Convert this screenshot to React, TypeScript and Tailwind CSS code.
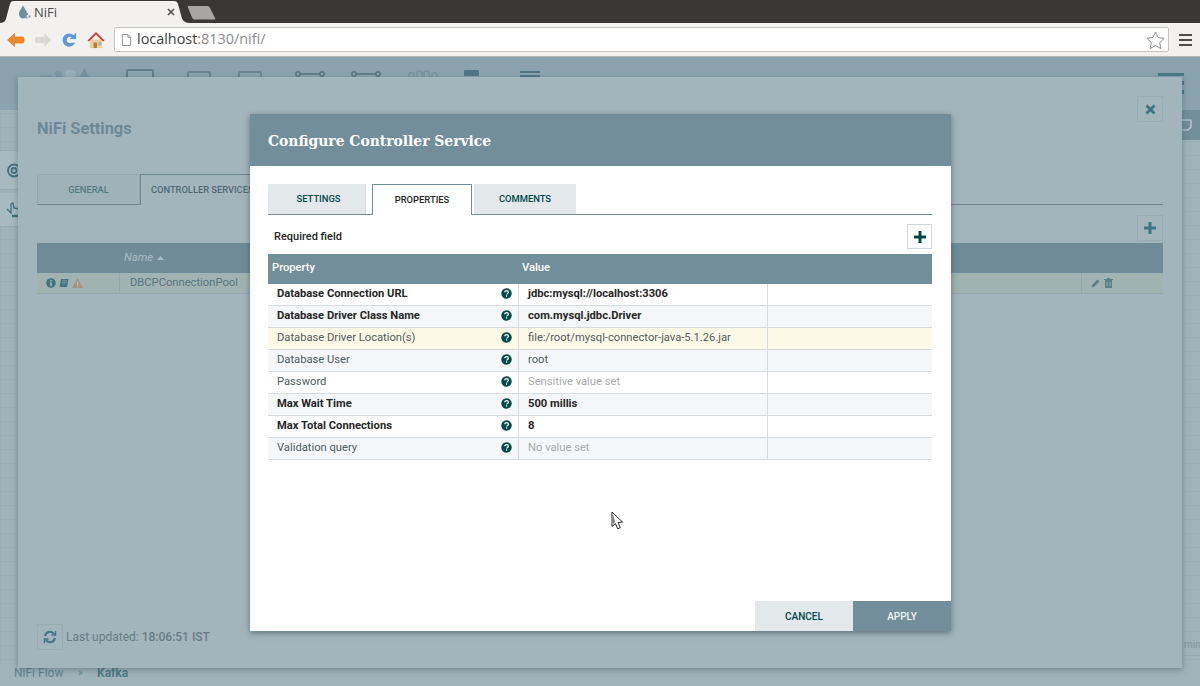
import React from "react";

const rows: { name: string; value: string; bold?: boolean; muted?: boolean; bg: string }[] = [
  { name: "Database Connection URL", value: "jdbc:mysql://localhost:3306", bold: true, bg: "bg-white" },
  { name: "Database Driver Class Name", value: "com.mysql.jdbc.Driver", bold: true, bg: "bg-[#f4f6f7]" },
  { name: "Database Driver Location(s)", value: "file:/root/mysql-connector-java-5.1.26.jar", bg: "bg-[#fdf9e7]" },
  { name: "Database User", value: "root", bg: "bg-[#f4f6f7]" },
  { name: "Password", value: "Sensitive value set", muted: true, bg: "bg-white" },
  { name: "Max Wait Time", value: "500 millis", bold: true, bg: "bg-[#f4f6f7]" },
  { name: "Max Total Connections", value: "8", bold: true, bg: "bg-white" },
  { name: "Validation query", value: "No value set", muted: true, bg: "bg-[#f4f6f7]" },
];

function Help() {
  return (
    <svg width="11" height="11" viewBox="0 0 11 11" className="shrink-0 mb-[2px]">
      <circle cx="5.5" cy="5.5" r="5.2" fill="#004849" />
      <path d="M3.7 4.3c0-1 .8-1.6 1.8-1.6s1.9.6 1.9 1.5c0 1.3-1.7 1.2-1.7 2.4" fill="none" stroke="#fff" strokeWidth="1.3" />
      <rect x="4.9" y="7.3" width="1.3" height="1.3" fill="#fff" />
    </svg>
  );
}

function Cursor() {
  return (
    <svg width="13" height="19" viewBox="0 0 13 19" className="absolute left-[611px] top-[454px]">
      <path d="M1 1v14.5l3.4-3 2.3 5.3 2.6-1.1-2.3-5.2 4.6-.4z" fill="#fff" stroke="#222" strokeWidth="1" strokeLinejoin="round" />
      <path d="M2 3v10l2-2z" fill="#777" />
    </svg>
  );
}

function ChromeBar() {
  return (
    <>
      <div className="relative h-[23px] bg-[#3a3835] shrink-0">
        <svg width="200" height="23" viewBox="0 0 200 23" className="absolute left-0 top-0">
          <path d="M0 23c5 0 6-3 7-8l3-11c.6-2 1.6-3 4-3h160c2.4 0 3.4 1 4 3l3 11c1 5 3 8 9 8z" fill="#f2f1f0" />
        </svg>
        <svg width="30" height="18" viewBox="0 0 30 18" className="absolute left-[187px] top-[5px]">
          <path d="M1 1h19c1.5 0 2 .5 3 2l5 10c.5 1 .3 1.500-1 1.500H8c-1.500 0-2-.5-3-2L1 2.500C.6 1.500.5 1 1 1z" fill="#a8a6a3" />
        </svg>
        <svg width="13" height="15" viewBox="0 0 13 15" className="absolute left-[18px] top-[5px]">
          <path d="M5 0C5.500 3 9 5 9 9a4 4.500 0 0 1-8 0C1 5 4.500 3 5 0z" fill="#6f8ea0" />
          <rect x="8" y="8" width="2" height="2" fill="#7f99a8" />
          <rect x="10.500" y="10.500" width="2" height="2" fill="#7f99a8" />
          <rect x="7.500" y="11.500" width="2" height="2" fill="#7f99a8" />
        </svg>
        <span className="absolute left-[34px] top-[3px] text-[13px] leading-[18px] text-[#4a4a4a] font-['Open_Sans',sans-serif]">NiFi</span>
        <svg width="8" height="8" viewBox="0 0 8 8" className="absolute left-[167px] top-[8px]">
          <path d="M1 1l6 6M7 1L1 7" stroke="#555" strokeWidth="1.700" />
        </svg>
      </div>
      <div className="h-[34px] shrink-0 bg-[#f2f1f0] border-b border-[#b3b3b0] flex items-center pl-[7px] pr-[8px]">
        <svg width="18" height="16" viewBox="0 0 18 16" className="mr-[9px]">
          <path d="M.5 8l7-6.500V5H16c1.500 0 1.500 6 0 6H7.500v3.500z" fill="#ef8a2c" stroke="#d8701c" strokeWidth=".6" />
        </svg>
        <svg width="18" height="16" viewBox="0 0 18 16" className="mr-[9px]">
          <path d="M17.500 8l-7-6.500V5H2c-1.500 0-1.500 6 0 6h8.500v3.500z" fill="#d9d8d6" />
        </svg>
        <svg width="17" height="17" viewBox="0 0 18 18" className="mr-[9px]">
          <path d="M13.500 4.500A7 7 0 1 0 15 12.500h-3.800A3.400 3.400 0 1 1 11 6.500L9 8.500h7V1.500z" fill="#5d9bd8" />
        </svg>
        <svg width="18" height="18" viewBox="0 0 19 19" className="mr-[9px]">
          <path d="M3 9h13v9H3z" fill="#e8cf9b" />
          <path d="M.5 10L9.500 1l9 9-1.500 1-7.500-7L2 11z" fill="#c9413c" />
          <path d="M7 12h3.500v6H7z" fill="#b67a38" />
          <path d="M12 12h3v3h-3z" fill="#8fb2cf" />
        </svg>
        <div className="h-[25px] flex-1 bg-white border border-[#c4c3c1] rounded-[2px] flex items-center pl-[6px] mr-[10px]">
          <svg width="11" height="14" viewBox="0 0 12 14" className="mr-[5px]">
            <path d="M1.500 1h6l3 3v9h-9z M7.500 1v3h3" fill="#fff" stroke="#8c8c8c" />
          </svg>
          <span className="text-[14.4px] leading-none font-['Open_Sans',sans-serif] text-[#3d3d3d]">
            localhost<span className="text-[#8a8a8a]">:8130/nifi/</span>
          </span>
          <svg width="19" height="18" viewBox="0 0 19 18" className="ml-auto mr-[3px]">
            <path d="M9.500 1l2.600 5.500 6 .8-4.400 4.200 1.100 6-5.300-2.900-5.300 2.900 1.100-6L1 7.300l6-.8z" fill="#fff" stroke="#8c8c8c" />
          </svg>
        </div>
        <div className="w-[13px] flex flex-col gap-[3px]">
          <div className="h-[2px] bg-[#4d4d4d]" />
          <div className="h-[2px] bg-[#4d4d4d]" />
          <div className="h-[2px] bg-[#4d4d4d]" />
        </div>
      </div>
    </>
  );
}

function PageToolbar() {
  return (
    <div className="relative h-[53px] bg-[#8ba3af] flex items-start pt-[12px]">
      <div className="ml-[40px] w-[50px] flex items-end gap-[3px] h-[9px]">
        <span className="w-[12px] h-[3px] mt-auto bg-[#7f98a5] rounded-sm" />
        <span className="w-[7px] h-[7px] rounded-full bg-[#7f98a5]" />
        <span className="w-[12px] h-[8px] rounded-sm bg-[#98aeb9]" />
        <svg width="11" height="10" viewBox="0 0 11 10"><path d="M5.500 0L11 10H0z" fill="#7592a0" /></svg>
      </div>
      <div className="ml-[36px] w-[28px] h-[20px] border-2 border-[#5f7d8b] rounded-[2px]" />
      <div className="ml-[33px] mt-[2px] w-[24px] h-[20px] border-2 border-[#6a8694] rounded-[2px]" />
      <div className="ml-[27px] mt-[2px] w-[24px] h-[20px] border-2 border-[#6a8694] rounded-[2px]" />
      <svg width="30" height="8" viewBox="0 0 30 8" className="ml-[33px] mt-[1px]" fill="none" stroke="#55747f" strokeWidth="1.500">
        <rect x="1" y="2" width="4" height="4" rx="1" /><rect x="25" y="2" width="4" height="4" rx="1" /><path d="M5 4h20" />
      </svg>
      <svg width="30" height="8" viewBox="0 0 30 8" className="ml-[26px] mt-[1px]" fill="none" stroke="#55747f" strokeWidth="1.500">
        <rect x="1" y="2" width="4" height="4" rx="1" /><rect x="25" y="2" width="4" height="4" rx="1" /><path d="M5 4h20" />
      </svg>
      <svg width="30" height="8" viewBox="0 0 30 8" className="ml-[27px] mt-[1px]" fill="none" stroke="#6f8b98" strokeWidth="1">
        <rect x="1" y="3" width="5" height="5" rx="1" /><rect x="9" y="1" width="5" height="7" rx="1" /><rect x="16" y="1" width="5" height="7" rx="1" /><rect x="24" y="3" width="5" height="5" rx="1" />
      </svg>
      <div className="ml-[26px] mt-[1px] w-[15px] h-[6px] bg-[#4f7684] rounded-[1px]" />
      <div className="ml-[41px] mt-[2px] w-[20px] flex flex-col gap-[2px]">
        <div className="h-[2px] bg-[#4f7684]" />
        <div className="h-[2px] bg-[#4f7684]" />
      </div>
      <div className="absolute left-[1158px] top-[16px] w-[26px] h-[3px] bg-[#4a7a85]" />
      <div className="absolute left-[1182px] top-[24px] w-[2px] h-[4px] bg-[#4a7a85]" />
      <div className="absolute left-[1182px] top-[33px] w-[2px] h-[4px] bg-[#4a7a85]" />
    </div>
  );
}

function SidePieces() {
  return (
    <>
      <div className="absolute left-0 top-[93px] w-[18px] flex flex-col gap-[3px]">
        <div className="h-[40px] flex items-center justify-end bg-[#a8bac1] border-y border-[#96aab1]">
          <svg width="14" height="15" viewBox="0 0 14 15" fill="none" stroke="#42707d" strokeWidth="1.800" className="mr-[-2px]">
            <circle cx="8" cy="7.500" r="6" /><circle cx="8" cy="7.500" r="2.500" />
          </svg>
        </div>
        <div className="h-[34px] flex items-center justify-end bg-[#a8bac1] border-b border-[#96aab1]">
          <svg width="13" height="16" viewBox="0 0 13 16" fill="none" stroke="#42707d" strokeWidth="1.300" className="mr-[-1px]">
            <path d="M1 7l4 4V2l2-1 1 5 5 1" /><path d="M6 14h7" strokeWidth="2.500" />
          </svg>
        </div>
      </div>
      <div className="absolute left-[1182px] top-[53px] w-[18px] h-[30px] bg-[#728e9b] flex items-center">
        <svg width="10" height="12" viewBox="0 0 10 12"><path d="M0 1h9v7l-3 3H0" fill="none" stroke="#c7d3d9" strokeWidth="1.200" /></svg>
      </div>
      <div className="absolute left-[1184px] top-[581px] w-[16px] text-[10px] leading-[14px] text-[#84999f] border-b border-[#93a7ae] pb-[3px]">min</div>
    </>
  );
}

function IconBox({ children }: { children: React.ReactNode }) {
  return <div className="w-[26px] h-[26px] border border-[#99acb3] flex items-center justify-center">{children}</div>;
}

function SettingsDialog() {
  return (
    <div className="absolute left-[18px] top-[20px] w-[1164px] h-[591px] bg-[#a3b5bc] shadow-[0_2px_6px_rgba(60,80,90,0.45)] flex flex-col px-[19px] text-[#56707c]">
      <div className="flex justify-between pt-[19px] h-[97px] shrink-0">
        <div className="text-[16.4px] font-bold pt-[23px] leading-[20px] text-[#6d8997]">NiFi Settings</div>
        <IconBox>
          <svg width="11" height="11" viewBox="0 0 11 11">
            <path d="M1.500 1.500l8 8M9.500 1.500l-8 8" stroke="#3f7480" strokeWidth="2.800" />
          </svg>
        </IconBox>
      </div>
      <div className="flex shrink-0 items-stretch h-[31px] border-b border-[#6a8490]">
        <div className="w-[103px] -mb-px bg-[#a0b2b9] border border-[#93a8b0] border-b-[#6a8490] flex items-center justify-center text-[9.3px] font-medium text-[#567a82]">GENERAL</div>
        <div className="w-[128px] -mb-px bg-[#a3b5bc] border-t border-l border-[#6a8490] pl-[10px] flex items-center text-[9.3px] font-medium text-[#4f6a75] whitespace-nowrap">CONTROLLER SERVICES</div>
      </div>
      <div className="flex justify-end mt-[10px] shrink-0">
        <IconBox>
          <svg width="12" height="12" viewBox="0 0 12 12">
            <path d="M6 0v12M0 6h12" stroke="#3f7480" strokeWidth="3" />
          </svg>
        </IconBox>
      </div>
      <div className="h-[30px] mt-[2px] bg-[#6f8b98] shrink-0 flex items-center pl-[87px] text-[11.2px] italic text-[#a9bcc4]">
        Name
        <svg width="7" height="4" viewBox="0 0 7 4" className="ml-[4px]">
          <path d="M0 4l3.500-4L7 4z" fill="#a9bcc4" />
        </svg>
      </div>
      <div className="h-[21px] bg-[#a0b3b0] border-b border-[#93a7a9] flex items-center shrink-0 text-[11.2px] text-[#5a7480]">
        <div className="w-[83px] h-full flex items-center gap-[3px] pl-[9px] border-r border-[#93a7a9]">
          <svg width="10" height="10" viewBox="0 0 10 10">
            <circle cx="5" cy="5" r="4.800" fill="#3f7480" />
            <path d="M4.200 2h1.600v1.400H4.200zM4.200 4.300h1.600V8H4.200z" fill="#a0b3b0" />
          </svg>
          <svg width="10" height="10" viewBox="0 0 10 10">
            <path d="M2 1h7.500L8 9H.5z" fill="#3f7480" />
            <path d="M3 3h5M2.700 5h5" stroke="#a0b3b0" strokeWidth=".7" />
          </svg>
          <svg width="11" height="10" viewBox="0 0 11 10">
            <path d="M5.500 0L11 10H0z" fill="#a3967e" />
            <path d="M5 3.500h1v3.500H5zM5 7.700h1v1H5z" fill="#c4bcab" />
          </svg>
        </div>
        <div className="pl-[10px] flex-1">DBCPConnectionPool</div>
        <div className="w-[82px] h-full flex items-center gap-[3px] pl-[9px] border-l border-[#93a7a9]">
          <svg width="10" height="10" viewBox="0 0 10 10"><path d="M.5 9.500l1-3 5-5 2 2-5 5z" fill="#5a7f86" /></svg>
          <svg width="9" height="10" viewBox="0 0 9 10"><path d="M1 2h7v8H1zM3 0h3v1H3zM0 1h9v1H0z" fill="#5a7f86" /><path d="M3 4v4M6 4v4" stroke="#a0b3b0" /></svg>
        </div>
      </div>
      <div className="mt-auto mb-[18px] flex items-center gap-[3px] text-[12px] text-[#667d87]">
        <IconBox>
          <svg width="14" height="14" viewBox="0 0 14 14" fill="none" stroke="#3f7480" strokeWidth="2">
            <path d="M2 6a5 5 0 0 1 9-2M12 8a5 5 0 0 1-9 2" />
            <path d="M12.500 1v4h-4M1.500 13V9h4" strokeWidth="1.500" />
          </svg>
        </IconBox>
        <span>Last updated: <span className="font-medium">18:06:51 IST</span></span>
      </div>
    </div>
  );
}

function ConfigDialog() {
  return (
    <div className="absolute left-[250px] top-[57px] w-[701px] h-[517px] bg-white shadow-[0_2px_6px_rgba(40,60,70,0.55)] flex flex-col">
      <div className="h-[52px] bg-[#728e9b] shrink-0 flex items-center pl-[18px] pt-[2px] text-[15.45px] font-bold text-white font-['DejaVu_Serif_Condensed','DejaVu_Serif',serif]">
        Configure Controller Service
      </div>
      <div className="pl-[18px] pr-[19px] pt-[18px] flex-1 min-h-0">
        <div className="flex h-[31px] border-b border-[#728e9b] items-stretch">
          <div className="w-[98px] h-[30px] pl-[4px] bg-[#e3e8eb] border-r border-[#d5dbde] flex items-center justify-center text-[9.4px] font-medium text-[#004849] mr-[6px]">SETTINGS</div>
          <div className="w-[100px] h-[31px] bg-white border-t border-l border-r border-[#728e9b] flex items-center justify-center text-[9.4px] font-medium text-[#262626] mr-[2px]">PROPERTIES</div>
          <div className="w-[102px] h-[30px] bg-[#e3e8eb] flex items-center justify-center text-[9.4px] font-medium text-[#004849]">COMMENTS</div>
        </div>
        <div className="h-[39px] flex items-center justify-between pl-[6px] pt-[4px]">
          <span className="text-[11px] font-medium text-[#262626] pt-[2px]">Required field</span>
          <div className="w-[25px] h-[25px] border border-[#cdd6da] flex items-center justify-center">
            <svg width="12" height="12" viewBox="0 0 12 12">
              <path d="M6 0v12M0 6h12" stroke="#004849" strokeWidth="3" />
            </svg>
          </div>
        </div>
        <div className="h-[30px] bg-[#728e9b] flex items-center pb-px text-[11.2px] font-medium text-white">
          <div className="w-[250px] pl-[4px]">Property</div>
          <div className="pl-[4px]">Value</div>
        </div>
        {rows.map((r) => (
          <div key={r.name} className={`h-[22px] flex items-center border-b border-[#d5dbde] text-[11.2px] ${r.bg}`}>
            <div className={`w-[251px] h-full flex items-center justify-between pl-[9px] pr-[6px] pb-px border-r border-[#d5dbde] ${r.bold ? "font-bold text-[#262626]" : "text-[#4f5c60]"}`}>
              <span>{r.name}</span>
              <Help />
            </div>
            <div className={`w-[249px] h-full flex items-center pl-[9px] pb-px border-r border-[#d5dbde] ${r.bold ? "font-bold text-[#262626]" : r.muted ? "text-[#aaaaaa]" : "text-[#4f5c60]"}`}>
              {r.value}
            </div>
          </div>
        ))}
      </div>
      <div className="flex justify-end h-[30px] shrink-0 text-[10px] font-medium">
        <div className="w-[98px] bg-[#e3e8eb] text-[#004849] flex items-center justify-center pt-[1px]">CANCEL</div>
        <div className="w-[98px] bg-[#728e9b] text-[#eef2f4] flex items-center justify-center pt-[1px]">APPLY</div>
      </div>
    </div>
  );
}

export default function App() {
  return (
    <div className="w-full h-[686px] overflow-hidden flex flex-col font-['Roboto',sans-serif]">
      <ChromeBar />
      <div className="relative flex-1 bg-[#a0b3ba] bg-[linear-gradient(#9aaeb5_1px,transparent_1px),linear-gradient(90deg,#9aaeb5_1px,transparent_1px)] bg-[size:14px_14px]">
        <PageToolbar />
        <SidePieces />
        <div className="absolute left-0 right-0 top-[609px] h-[20px] bg-[#a0b3ba]" />
        <div className="absolute left-[14px] top-[609px] flex items-center text-[12px] leading-[14px] text-[#638392]">
          <span className="w-[64px]">NiFi Flow</span>
          <span className="w-[19px] text-[10px]">»</span>
          <span className="font-bold text-[#4f7a89]">Kafka</span>
        </div>
        <SettingsDialog />
        <ConfigDialog />
        <Cursor />
      </div>
    </div>
  );
}
